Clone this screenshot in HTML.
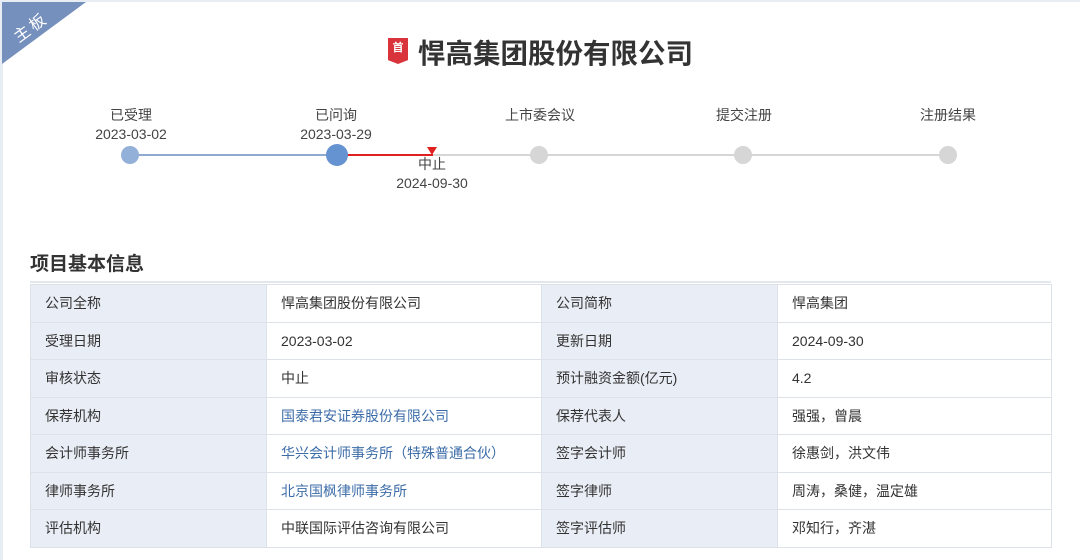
<!DOCTYPE html>
<html><head><meta charset="utf-8"><style>
*{margin:0;padding:0;box-sizing:border-box}
body{width:1080px;height:560px;overflow:hidden;background:#fff;font-family:"Liberation Sans","Noto Sans CJK SC",sans-serif;color:#333;position:relative}
.frame{position:absolute;left:0;top:0;width:1080px;height:560px;border-left:3px solid #e8ecf3;border-top:2px solid #e8ecf3}
.corner{position:absolute;left:2px;top:2px;width:0;height:0;border-top:62px solid #7690bd;border-right:84px solid transparent}
.corner span{position:absolute;left:9px;top:-50px;color:#fff;font-size:16px;transform:rotate(-36deg);letter-spacing:3px;white-space:nowrap}
.title{position:absolute;left:388px;top:31px;font-size:27.5px;font-weight:bold;color:#333;display:flex;align-items:center}
.badge{width:20px;height:26px;background:#d9343b;color:#fff;font-size:11px;text-align:center;line-height:20px;margin-right:10px;clip-path:polygon(0 0,100% 0,100% 85%,50% 100%,0 85%)}
.t{position:absolute;font-size:14px;color:#444;text-align:center;width:120px;line-height:19px}
.line{position:absolute;height:2px;top:154px}
.dot{position:absolute;border-radius:50%}
h2{position:absolute;left:30px;top:249px;font-size:19px;font-weight:bold;color:#333}
.sep{position:absolute;left:30px;top:281px;width:1021px;height:2px;background:#e3e6ea}
table{position:absolute;left:30px;top:284px;border-collapse:collapse;width:1022px;font-size:14px}
td{border:1px solid #dde2e8;height:37.5px;padding:0 14px;color:#333}
td.l{background:#e9eef6;width:236px}
td.v{width:275px}
a{color:#3d6da8;text-decoration:none}
</style></head><body>
<div class="frame"></div>
<div class="corner"><span>主板</span></div>
<div class="title"><div class="badge">首</div>悍高集团股份有限公司</div>

<div class="t" style="left:71px;top:106px">已受理<br>2023-03-02</div>
<div class="t" style="left:276px;top:106px">已问询<br>2023-03-29</div>
<div class="t" style="left:480px;top:106px">上市委会议</div>
<div class="t" style="left:684px;top:106px">提交注册</div>
<div class="t" style="left:888px;top:106px">注册结果</div>
<div class="line" style="left:130px;width:207px;background:#8faad0"></div>
<div class="line" style="left:337px;width:96px;background:#e0201f"></div>
<div class="line" style="left:433px;width:515px;background:#d6d6d6"></div>
<div class="dot" style="left:121px;top:146px;width:18px;height:18px;background:#93b0d8"></div>
<div class="dot" style="left:326px;top:144px;width:22px;height:22px;background:#6592d1"></div>
<div class="dot" style="left:530px;top:146px;width:18px;height:18px;background:#d6d6d6"></div>
<div class="dot" style="left:734px;top:146px;width:18px;height:18px;background:#d6d6d6"></div>
<div class="dot" style="left:939px;top:146px;width:18px;height:18px;background:#d6d6d6"></div>
<div style="position:absolute;left:427px;top:147px;width:0;height:0;border-left:5px solid transparent;border-right:5px solid transparent;border-top:8px solid #e0201f"></div>
<div class="t" style="left:372px;top:155px">中止<br>2024-09-30</div>

<h2>项目基本信息</h2>
<div class="sep"></div>
<table>
<tr><td class="l">公司全称</td><td class="v">悍高集团股份有限公司</td><td class="l">公司简称</td><td>悍高集团</td></tr>
<tr><td class="l">受理日期</td><td class="v">2023-03-02</td><td class="l">更新日期</td><td>2024-09-30</td></tr>
<tr><td class="l">审核状态</td><td class="v">中止</td><td class="l">预计融资金额(亿元)</td><td>4.2</td></tr>
<tr><td class="l">保荐机构</td><td class="v"><a>国泰君安证券股份有限公司</a></td><td class="l">保荐代表人</td><td>强强，曾晨</td></tr>
<tr><td class="l">会计师事务所</td><td class="v"><a>华兴会计师事务所（特殊普通合伙）</a></td><td class="l">签字会计师</td><td>徐惠剑，洪文伟</td></tr>
<tr><td class="l">律师事务所</td><td class="v"><a>北京国枫律师事务所</a></td><td class="l">签字律师</td><td>周涛，桑健，温定雄</td></tr>
<tr><td class="l">评估机构</td><td class="v">中联国际评估咨询有限公司</td><td class="l">签字评估师</td><td>邓知行，齐湛</td></tr>
</table>
</body></html>
